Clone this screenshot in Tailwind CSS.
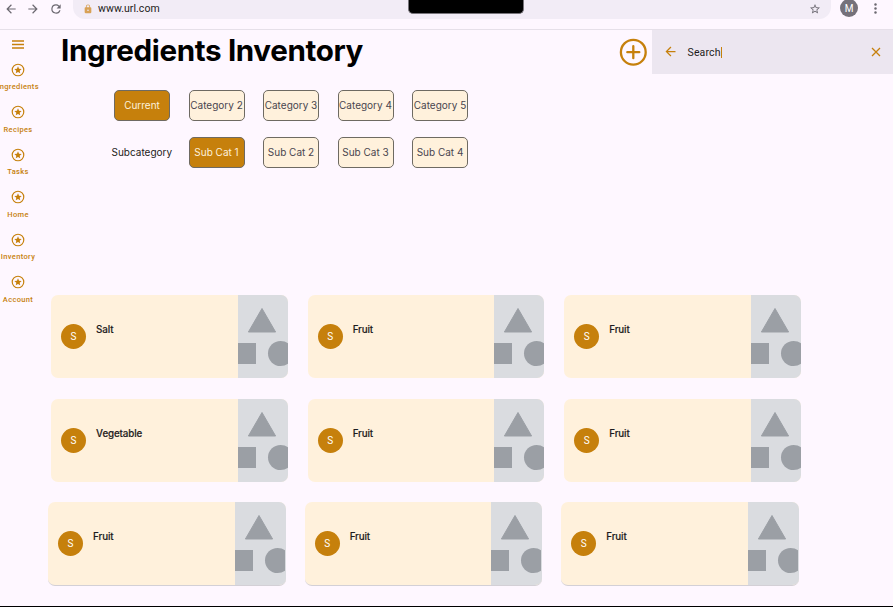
<!DOCTYPE html>
<html lang="en">
<head>
<meta charset="utf-8">
<title>Ingredients Inventory</title>
<script src="https://cdn.jsdelivr.net/npm/@tailwindcss/browser@4"></script>
</head>
<body class="flex h-[607px] w-[893px] flex-col overflow-hidden border-b border-black bg-[#fef7ff] font-['Inter',sans-serif] text-[#1d1b20]">
<svg class="hidden">
  <symbol id="star" viewBox="0 0 24 24"><circle cx="12" cy="12" r="9.9" fill="none" stroke="currentColor" stroke-width="2"/><path fill="currentColor" d="M12 5.6l1.75 4.25 4.6.4-3.5 3 1.05 4.5L12 15.35 8.1 17.75l1.05-4.5-3.5-3 4.6-.4z"/></symbol>
  <symbol id="back" viewBox="0 0 24 24"><path fill="currentColor" d="M20 11H7.83l5.59-5.59L12 4l-8 8 8 8 1.41-1.41L7.83 13H20z"/></symbol>
  <symbol id="media" viewBox="0 0 50 83" preserveAspectRatio="xMinYMid meet"><g fill="#9b9fa5" stroke="#9b9fa5" stroke-linejoin="round"><path d="M24 13.5 37.6 37H10.4z"/><path stroke="none" d="M0 48h18v21H0z"/><circle stroke="none" cx="42.6" cy="58.5" r="12.6"/></g></symbol>
</svg>

<header class="relative flex h-[30px] shrink-0 items-start border-b border-[#e6e0e9] font-['Roboto',sans-serif]">
  <div class="flex h-[17px] w-[73px] items-center gap-[9px] pl-1 text-[#6b6870]">
    <svg class="size-[14px] shrink-0"><use href="#back"/></svg>
    <svg class="size-[14px] shrink-0 rotate-180 -ml-px"><use href="#back"/></svg>
    <svg class="size-[14px] shrink-0" viewBox="0 0 24 24"><path fill="currentColor" d="M17.65 6.35A7.96 7.96 0 0 0 12 4a8 8 0 1 0 7.73 10h-2.08A6 6 0 1 1 12 6c1.66 0 3.14.69 4.22 1.78L13 11h7V4z"/></svg>
  </div>
  <div class="-mt-1 flex h-[23px] w-[758px] items-center rounded-b-[12px] bg-[#f2ecf6] pt-[2px] pl-[10px] pr-[10px]">
    <svg class="size-[10px]" viewBox="0 0 24 24"><path fill="#d8a155" d="M18 8h-1V6A5 5 0 0 0 7 6v2H6a2 2 0 0 0-2 2v10c0 1.1.9 2 2 2h12a2 2 0 0 0 2-2V10a2 2 0 0 0-2-2zm-6 9a2 2 0 1 1 0-4 2 2 0 0 1 0 4zm3.1-9H8.9V6a3.1 3.1 0 0 1 6.2 0z"/></svg>
    <span class="ml-[5px] text-[10.5px] tracking-[0.05px]">www.url.com</span>
    <svg class="ml-auto size-[12px]" viewBox="0 0 24 24"><path fill="#6b6870" d="M22 9.24l-7.19-.62L12 2 9.19 8.63 2 9.24l5.46 4.73L5.82 21 12 17.27 18.18 21l-1.63-7.03zM12 15.4l-3.76 2.27 1-4.28-3.32-2.88 4.38-.38L12 6.1l1.71 4.04 4.38.38-3.32 2.88 1 4.28z"/></svg>
  </div>
  <div class="-mt-px ml-[9px] flex size-[18px] items-center justify-center rounded-full bg-[#75717a] text-[10px] text-white">M</div>
  <svg class="ml-[11px] mt-[2px] size-[13px]" viewBox="0 0 24 24"><g fill="#6b6870"><circle cx="12" cy="4.5" r="2.3"/><circle cx="12" cy="12" r="2.3"/><circle cx="12" cy="19.5" r="2.3"/></g></svg>
  <div class="absolute left-[408px] top-0 h-[14px] w-[116px] rounded-b-[5px] border border-t-0 border-[#77747a] bg-black"></div>
</header>

<div class="flex min-h-0 flex-1">
  <nav class="flex w-9 shrink-0 flex-col items-center text-[#c6800c]">
    <svg class="mt-[9px] h-[11px] w-3 shrink-0" viewBox="0 0 12 11"><path d="M0 2h12M0 5.5h12M0 9h12" stroke="currentColor" stroke-width="1.3"/></svg>
    <div id="nav" class="mt-[12.6px] flex flex-col items-center"></div>
  </nav>

  <main class="flex min-w-0 flex-1 flex-col">
    <div class="flex h-[44px] shrink-0 items-center">
      <h1 class="ml-[25px] w-[558px] whitespace-nowrap pb-[4px] text-[29.6px] leading-[36px] font-bold tracking-[-0.37px] text-black">Ingredients Inventory</h1>
      <svg class="size-[28px] shrink-0" viewBox="0 0 28 28"><path d="M14.3 8.2v12M8.3 14.2h12" stroke="#c6800c" stroke-width="2.3" stroke-linecap="round"/><circle cx="14.3" cy="14.2" r="12.4" fill="none" stroke="#c6800c" stroke-width="2.3"/></svg>
      <div class="ml-auto flex h-[45px] w-[241px] items-center self-start -mt-px bg-[#ece6f0] px-[11px] font-['Roboto',sans-serif] text-[#c6800c]">
        <svg class="size-[15px]"><use href="#back"/></svg>
        <span class="ml-[9.5px] mt-px border-r border-[#c6800c] text-[10.5px] leading-[11px] tracking-[0.15px] text-[#1d1b20]">Search</span>
        <svg class="ml-auto size-[12px]" viewBox="0 0 12 12"><path d="M2 2l8 8M10 2l-8 8" stroke="currentColor" stroke-width="1.3"/></svg>
      </div>
    </div>

    <div id="filters" class="mt-4 ml-[72px] flex flex-col gap-4 text-[10px]"></div>

    <div id="cards" class="mt-[127px] ml-[15px] flex flex-col gap-[21px]"></div>
  </main>
</div>

<script>
const nav = ['Ingredients', 'Recipes', 'Tasks', 'Home', 'Inventory', 'Account'];
document.getElementById('nav').innerHTML = nav.map(n => `
  <a class="flex h-[42.5px] flex-col items-center">
    <svg class="size-[14px]"><use href="#star"/></svg>
    <span class="mt-[5.5px] font-['Roboto',sans-serif] text-[7.5px] leading-[10px] font-medium tracking-[0.35px]">${n}</span>
  </a>`).join('');

const chip = (t, on) => `<button class="h-[31px] w-[56px] shrink-0 rounded-[5px] border border-[#6e6a62] whitespace-nowrap ${on ? 'bg-[#c6800c] text-[#fdf1dc]' : 'bg-[#fff1dc] text-[#49454f]'}"><span class="-mx-2">${t}</span></button>`;
document.getElementById('filters').innerHTML =
  `<div class="flex gap-[18.5px] pl-[6px]">${chip('Current', true)}${['Category 2', 'Category 3', 'Category 4', 'Category 5'].map(t => chip(t, false)).join('')}</div>
   <div class="flex items-center gap-[18.5px]"><span class="w-[62px] pl-[3.5px]">Subcategory</span>${chip('Sub Cat 1', true)}${['Sub Cat 2', 'Sub Cat 3', 'Sub Cat 4'].map(t => chip(t, false)).join('')}</div>`;

const rows = [['Salt', 'Fruit', 'Fruit'], ['Vegetable', 'Fruit', 'Fruit'], ['Fruit', 'Fruit', 'Fruit']];
document.getElementById('cards').innerHTML = rows.map((r, i) => `
  <div class="flex gap-[19.8px] ${i === 2 ? '-ml-[3px] -mt-px' : ''}">${r.map(t => `
    <article class="flex overflow-hidden rounded-[7px] bg-[#fff1dc] ${i === 2 ? 'h-[84px] w-[237.6px] -mr-[0.8px] border-b border-[#d3d0d6]' : 'h-[83px] w-[236.8px]'}">
      <div class="flex w-[186.7px] shrink-0 pl-[10px]">
        <div class="mt-[29px] flex size-[25px] items-center justify-center rounded-full bg-[#c6800c] font-['Roboto',sans-serif] text-[10px] text-white">S</div>
        <h2 class="mt-[28px] ml-[10.1px] text-[9.8px] leading-[14px] font-medium tracking-[-0.13px] [-webkit-text-stroke:0.15px]">${t}</h2>
      </div>
      <div class="flex-1 bg-[#dadce0]"><svg class="h-[83px] w-[50px]"><use href="#media"/></svg></div>
    </article>`).join('')}
  </div>`).join('');
</script>
</body>
</html>
